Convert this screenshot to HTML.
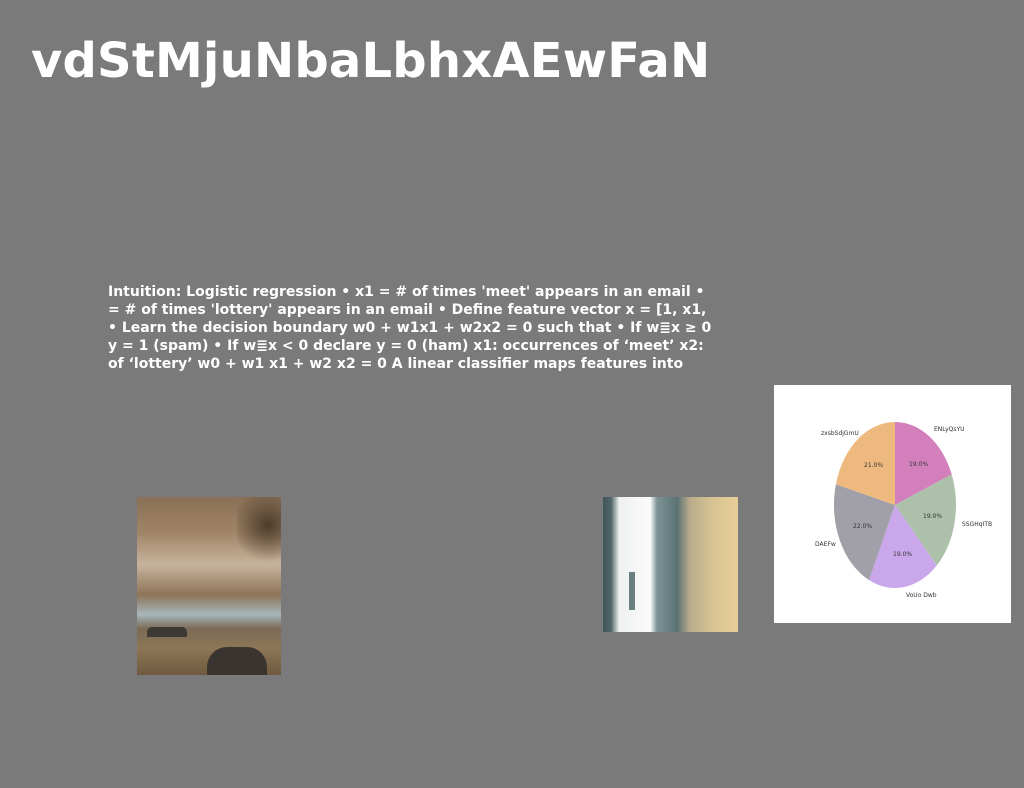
<!DOCTYPE html>
<html><head><meta charset="utf-8"><style>
html,body{margin:0;padding:0}
body{width:1024px;height:788px;background:#7a7a7a;position:relative;overflow:hidden;font-family:"DejaVu Sans","Liberation Sans",sans-serif;color:#fff}
h1{position:absolute;left:31px;top:33px;margin:0;font-size:48px;font-weight:bold;letter-spacing:0.2px;white-space:nowrap}
.p{position:absolute;left:108px;top:283px;font-size:14px;font-weight:bold;line-height:18px;white-space:nowrap;letter-spacing:0}
.img{position:absolute}
</style></head><body>
<h1>vdStMjuNbaLbhxAEwFaN</h1>
<div class="p">Intuition: Logistic regression • x1 = # of times 'meet' appears in an email •<br>= # of times 'lottery' appears in an email • Define feature vector x = [1, x1,<br>• Learn the decision boundary w0 + w1x1 + w2x2 = 0 such that • If w≣x ≥ 0<br>y = 1 (spam) • If w≣x &lt; 0 declare y = 0 (ham) x1: occurrences of ‘meet’ x2:<br>of ‘lottery’ w0 + w1 x1 + w2 x2 = 0 A linear classifier maps features into</div>

<div class="img" style="left:137px;top:497px;width:144px;height:178px;background:linear-gradient(180deg,#8a7056 0%,#a08468 20%,#c7b39c 38%,#8e7459 55%,#a7b7bc 66%,#7b6a55 74%,#8d7656 85%,#6f5a40 100%)">
<div style="position:absolute;left:70px;top:150px;width:60px;height:28px;background:#3a3430;border-radius:20px 20px 0 0"></div>
<div style="position:absolute;left:10px;top:130px;width:40px;height:10px;background:#3d3a36;border-radius:5px 5px 0 0"></div>
<div style="position:absolute;left:100px;top:0;width:44px;height:70px;background:radial-gradient(circle at 70% 40%,#4d3c2a,transparent 70%)"></div>
</div>

<div class="img" style="left:603px;top:497px;width:135px;height:135px;background:linear-gradient(90deg,#3f5458 0%,#4f6669 6%,#eef1f0 12%,#fbfcfb 35%,#7d9395 40%,#5b7375 55%,#b8a98a 64%,#d6c393 80%,#e8cd98 100%)">
<div style="position:absolute;left:26px;top:75px;width:6px;height:38px;background:#6a7f82"></div>
</div>

<svg class="img" style="left:774px;top:385px" width="237" height="238" viewBox="774 385 237 238">
<rect x="774" y="385" width="237" height="238" fill="#fff"/>
<path d="M895,505 L895,422 A61,83 0 0 1 951.7,474.4 Z" fill="#d27fbc"/>
<path d="M895,505 L951.7,474.4 A61,83 0 0 1 936.7,565.5 Z" fill="#adc0aa"/>
<path d="M895,505 L936.7,565.5 A61,83 0 0 1 869,580.1 Z" fill="#c9a7ea"/>
<path d="M895,505 L869,580.1 A61,83 0 0 1 835.9,484.3 Z" fill="#a19fa8"/>
<path d="M895,505 L835.9,484.3 A61,83 0 0 1 895,422 Z" fill="#eeb97f"/>
<g font-family="DejaVu Sans,sans-serif" font-size="6" fill="#333">
<text x="909" y="466">19.0%</text>
<text x="923" y="518">19.0%</text>
<text x="893" y="556">19.0%</text>
<text x="853" y="528">22.0%</text>
<text x="864" y="467">21.0%</text>
<text x="934" y="431">ENLyQsYU</text>
<text x="962" y="526">SSGHqITB</text>
<text x="906" y="597">VoUo Dwb</text>
<text x="815" y="546">DAEFw</text>
<text x="821" y="435">zxsbSdjGmU</text>
</g>
</svg>
</body></html>
